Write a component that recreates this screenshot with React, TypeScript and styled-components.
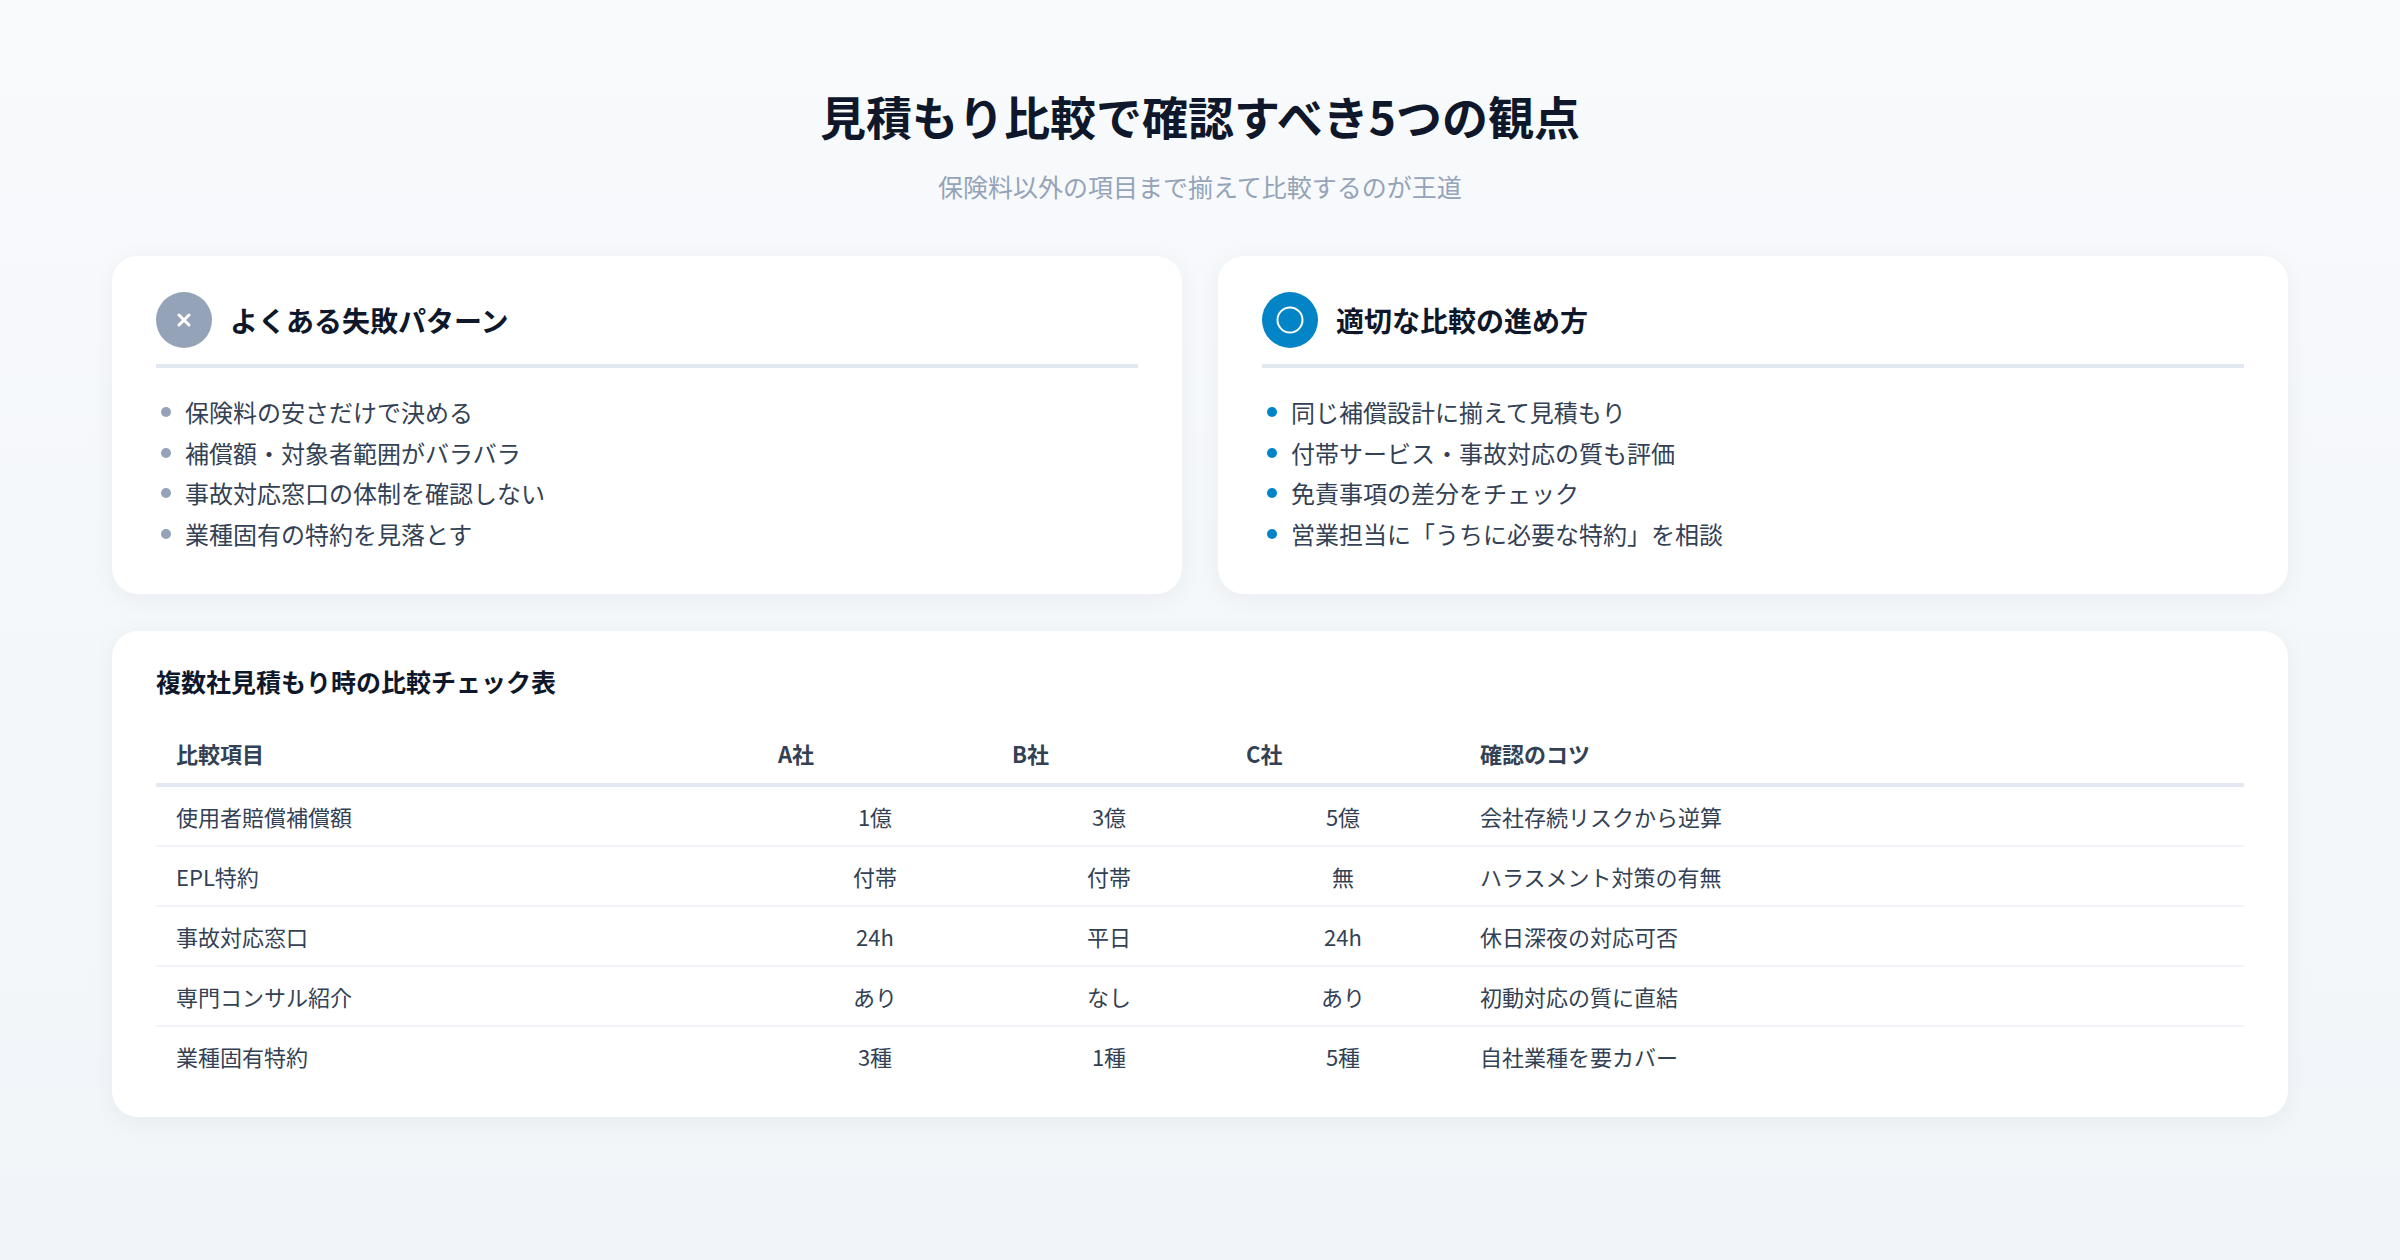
import React from "react";
import styled, { createGlobalStyle } from "styled-components";

const Global = createGlobalStyle`
  html, body { margin: 0; padding: 0; }
  body {
    background: linear-gradient(180deg, #f8fafc 0%, #f1f5f9 100%);
    min-height: 1260px;
    font-family: "Noto Sans CJK JP", "Noto Sans", sans-serif;
    color: #1e293b;
  }
`;

const Page = styled.div`
  width: 2176px;
  margin: 0 auto;
  padding-top: 82px;
  display: flex;
  flex-direction: column;
`;

const Title = styled.h1`
  margin: 0;
  text-align: center;
  font-size: 46px;
  font-weight: 700;
  color: #0f172a;
  line-height: 66px;
`;

const Subtitle = styled.p`
  margin: 20px 0 0;
  text-align: center;
  font-size: 25px;
  color: #94a3b8;
  line-height: 36px;
`;

const Grid = styled.div`
  margin-top: 52px;
  display: grid;
  grid-template-columns: 1fr 1fr;
  gap: 36px;
`;

const Card = styled.div`
  background: #fff;
  border-radius: 26px;
  box-shadow: 0 4px 24px rgba(15, 23, 42, 0.05);
  padding: 36px 44px 40px;
`;

const CardHeader = styled.div`
  display: flex;
  align-items: center;
  gap: 18px;
  padding-bottom: 16px;
  border-bottom: 4px solid #e2e8f0;
`;

const Badge = styled.div<{ $color: string }>`
  width: 56px;
  height: 56px;
  border-radius: 50%;
  background: ${(p) => p.$color};
  display: flex;
  align-items: center;
  justify-content: center;
`;

const CardTitle = styled.h2`
  margin: 0;
  font-size: 28px;
  font-weight: 700;
  color: #0f172a;
`;

const List = styled.ul`
  list-style: none;
  margin: 24px 0 0;
  padding: 0;
  display: flex;
  flex-direction: column;
`;

const Item = styled.li<{ $dot: string }>`
  display: flex;
  align-items: center;
  gap: 14px;
  font-size: 24px;
  line-height: 40.5px;
  color: #334155;
  &::before {
    content: "";
    width: 10px;
    height: 10px;
    border-radius: 50%;
    background: ${(p) => p.$dot};
    margin-left: 5px;
    flex-shrink: 0;
  }
`;

const TableCard = styled(Card)`
  margin-top: 37px;
  padding: 30px 44px 32px;
`;

const TableTitle = styled.h3`
  margin: 0;
  font-size: 25px;
  font-weight: 700;
  color: #0f172a;
  line-height: 40px;
`;

const Table = styled.table`
  margin-top: 22px;
  width: 100%;
  border-collapse: collapse;
  table-layout: fixed;
  font-size: 22px;
  color: #334155;
`;

const Th = styled.th<{ $w?: number }>`
  text-align: left;
  font-weight: 700;
  padding: 14px 20px;
  border-bottom: 4px solid #e2e8f0;
  width: ${(p) => (p.$w ? `${p.$w - 40}px` : "auto")};
`;

const Td = styled.td<{ $center?: boolean }>`
  padding: 0 20px;
  height: 58px;
  border-bottom: 2px solid #f1f5f9;
  text-align: ${(p) => (p.$center ? "center" : "left")};
  tr:last-child > & { border-bottom: none; }
`;

const bad = ["保険料の安さだけで決める", "補償額・対象者範囲がバラバラ", "事故対応窓口の体制を確認しない", "業種固有の特約を見落とす"];
const good = ["同じ補償設計に揃えて見積もり", "付帯サービス・事故対応の質も評価", "免責事項の差分をチェック", "営業担当に「うちに必要な特約」を相談"];
const rows = [
  ["使用者賠償補償額", "1億", "3億", "5億", "会社存続リスクから逆算"],
  ["EPL特約", "付帯", "付帯", "無", "ハラスメント対策の有無"],
  ["事故対応窓口", "24h", "平日", "24h", "休日深夜の対応可否"],
  ["専門コンサル紹介", "あり", "なし", "あり", "初動対応の質に直結"],
  ["業種固有特約", "3種", "1種", "5種", "自社業種を要カバー"],
];

export default function App() {
  return (
    <>
      <Global />
      <Page>
        <Title>見積もり比較で確認すべき5つの観点</Title>
        <Subtitle>保険料以外の項目まで揃えて比較するのが王道</Subtitle>
        <Grid>
          <Card>
            <CardHeader>
              <Badge $color="#94a3b8">
                <svg width="18" height="18" viewBox="0 0 18 18"><path d="M4 4L14 14M14 4L4 14" stroke="#fff" strokeWidth="3" strokeLinecap="round" /></svg>
              </Badge>
              <CardTitle>よくある失敗パターン</CardTitle>
            </CardHeader>
            <List>
              {bad.map((t) => <Item key={t} $dot="#94a3b8">{t}</Item>)}
            </List>
          </Card>
          <Card>
            <CardHeader>
              <Badge $color="#0284c7">
                <svg width="30" height="30" viewBox="0 0 30 30"><circle cx="15" cy="15" r="12.5" fill="none" stroke="#fff" strokeWidth="2" /></svg>
              </Badge>
              <CardTitle>適切な比較の進め方</CardTitle>
            </CardHeader>
            <List>
              {good.map((t) => <Item key={t} $dot="#0284c7">{t}</Item>)}
            </List>
          </Card>
        </Grid>
        <TableCard>
          <TableTitle>複数社見積もり時の比較チェック表</TableTitle>
          <Table>
            <thead>
              <tr>
                <Th $w={602}>比較項目</Th>
                <Th $w={234}>A社</Th>
                <Th $w={234}>B社</Th>
                <Th $w={234}>C社</Th>
                <Th>確認のコツ</Th>
              </tr>
            </thead>
            <tbody>
              {rows.map((r) => (
                <tr key={r[0]}>
                  <Td>{r[0]}</Td>
                  <Td $center>{r[1]}</Td>
                  <Td $center>{r[2]}</Td>
                  <Td $center>{r[3]}</Td>
                  <Td>{r[4]}</Td>
                </tr>
              ))}
            </tbody>
          </Table>
        </TableCard>
      </Page>
    </>
  );
}
